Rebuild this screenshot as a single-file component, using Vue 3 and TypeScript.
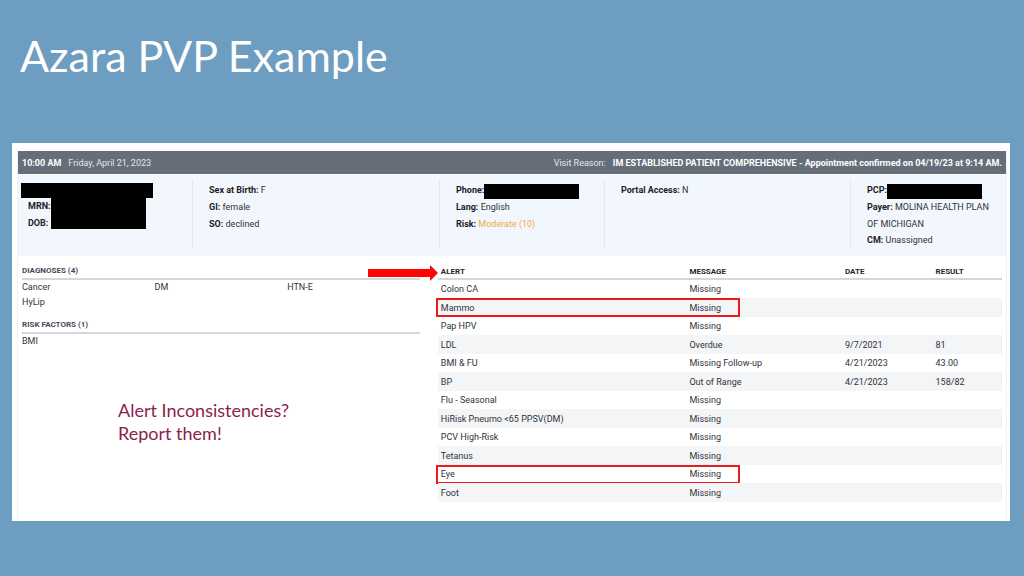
<script setup lang="ts">
interface Alert {
  name: string
  message: string
  date?: string
  result?: string
  marked?: boolean
}

const diagnoses: string[] = ['Cancer', 'DM', 'HTN-E', 'HyLip']
const riskFactors: string[] = ['BMI']

const alerts: Alert[] = [
  { name: 'Colon CA', message: 'Missing' },
  { name: 'Mammo', message: 'Missing', marked: true },
  { name: 'Pap HPV', message: 'Missing' },
  { name: 'LDL', message: 'Overdue', date: '9/7/2021', result: '81' },
  { name: 'BMI & FU', message: 'Missing Follow-up', date: '4/21/2023', result: '43.00' },
  { name: 'BP', message: 'Out of Range', date: '4/21/2023', result: '158/82' },
  { name: 'Flu - Seasonal', message: 'Missing' },
  { name: 'HiRisk Pneumo <65 PPSV(DM)', message: 'Missing' },
  { name: 'PCV High-Risk', message: 'Missing' },
  { name: 'Tetanus', message: 'Missing' },
  { name: 'Eye', message: 'Missing', marked: true },
  { name: 'Foot', message: 'Missing' },
]
</script>

<template>
  <main class="slide">
    <h1 class="title">Azara PVP Example</h1>

    <section class="panel">
      <div class="report">
        <header class="visit">
          <div class="when"><strong>10:00 AM</strong><span>Friday, April 21, 2023</span></div>
          <div class="reason">
            <span>Visit Reason:</span>
            <strong>IM ESTABLISHED PATIENT COMPREHENSIVE - Appointment confirmed on 04/19/23 at 9:14 AM.</strong>
          </div>
        </header>

        <div class="patient">
          <div class="cell identity">
            <div class="redacted name"></div>
            <div class="ids">
              <div class="labels">
                <p><b>MRN:</b></p>
                <p><b>DOB:</b></p>
              </div>
              <div class="redacted numbers"></div>
            </div>
          </div>
          <div class="cell">
            <p><b>Sex at Birth:</b> F</p>
            <p><b>GI:</b> female</p>
            <p><b>SO:</b> declined</p>
          </div>
          <div class="cell">
            <p class="hidden-value"><b>Phone:</b><span class="redacted value"></span></p>
            <p><b>Lang:</b> English</p>
            <p><b>Risk:</b> <span class="moderate">Moderate (10)</span></p>
          </div>
          <div class="cell">
            <p><b>Portal Access:</b> N</p>
          </div>
          <div class="cell">
            <p class="hidden-value"><b>PCP:</b><span class="redacted value"></span></p>
            <p><b>Payer:</b> MOLINA HEALTH PLAN<br />OF MICHIGAN</p>
            <p class="tight"><b>CM:</b> Unassigned</p>
          </div>
        </div>

        <div class="details">
          <div class="history">
            <h2>DIAGNOSES (4)</h2>
            <ul>
              <li v-for="d in diagnoses" :key="d">{{ d }}</li>
            </ul>
            <h2>RISK FACTORS (1)</h2>
            <ul>
              <li v-for="r in riskFactors" :key="r">{{ r }}</li>
            </ul>
            <p class="note">Alert Inconsistencies?<br />Report them!</p>
          </div>

          <div class="alerts">
            <svg class="arrow" viewBox="0 0 70 16" aria-hidden="true">
              <path d="M0 4H62V0L70 8L62 16V12H0Z" fill="#fb0505" />
            </svg>
            <table>
              <thead>
                <tr>
                  <th class="c-alert">ALERT</th>
                  <th class="c-message">MESSAGE</th>
                  <th class="c-date">DATE</th>
                  <th>RESULT</th>
                </tr>
              </thead>
              <tbody>
                <tr v-for="a in alerts" :key="a.name">
                  <td>{{ a.name }}<span v-if="a.marked" class="mark"></span></td>
                  <td>{{ a.message }}</td>
                  <td>{{ a.date }}</td>
                  <td>{{ a.result }}</td>
                </tr>
              </tbody>
            </table>
          </div>
        </div>
      </div>
    </section>
  </main>
</template>

<style>
body {
  margin: 0;
  background: #6d9dc0;
}
</style>

<style scoped>
.slide {
  box-sizing: border-box;
  min-height: 100vh;
  padding: 28px 14px 40px 12px;
  font-family: Lato, "Open Sans", sans-serif;
  color: #303338;
}
.title {
  margin: 0 0 59px 8px;
  font-size: 43px;
  line-height: 56px;
  font-weight: 400;
  color: #fff;
}
.panel {
  padding: 8px 3px 0 5px;
  background: #fff;
}
.report {
  border: solid #eef1f5;
  border-width: 0 1px;
  font-family: Roboto, "Open Sans", sans-serif;
  font-size: 9px;
}
.visit {
  display: flex;
  justify-content: space-between;
  padding: 1px 4px 0;
  line-height: 22px;
  background: #666e7a;
  color: #e3e6ea;
  white-space: nowrap;
}
.when,
.reason {
  display: flex;
  gap: 7px;
}
.visit strong {
  color: #fff;
}
.patient {
  display: grid;
  grid-template-columns: 174fr 247fr 165fr 246fr 156fr;
  margin-top: 1px;
  padding: 5px 0 7px;
  background: #f2f7fd;
}
.cell {
  min-height: 69px;
  box-sizing: border-box;
  padding: 2px 8px 0 16px;
  border-left: 1px solid #e2e8f0;
}
.cell p {
  margin: 0;
  line-height: 17px;
}
.cell .tight {
  line-height: 14px;
}
.cell b {
  color: #1d2024;
}
.cell.identity {
  padding: 3px 0 0 3px;
  border-left: 0;
}
.redacted {
  background: #000;
}
.name {
  width: 132px;
  height: 15px;
}
.ids {
  display: flex;
  padding-left: 7px;
}
.labels {
  width: 23px;
}
.numbers {
  width: 95px;
  height: 31px;
}
.hidden-value {
  display: flex;
}
.value {
  width: 95px;
  height: 15px;
  margin-top: 2px;
}
.moderate {
  color: #f5a742;
}
.details {
  display: grid;
  grid-template-columns: 397fr 563fr;
  column-gap: 18px;
  padding: 7px 4px 19px;
}
h2 {
  margin: 0;
  padding: 1px 0;
  border-bottom: 2px solid #d6d7d9;
  font-size: 8px;
  line-height: 13px;
  font-weight: 700;
  color: #454b57;
}
ul {
  display: grid;
  grid-template-columns: repeat(3, 1fr);
  margin: 0 0 7px;
  padding: 0;
  list-style: none;
  line-height: 15px;
}
.note {
  margin: 50px 0 0 96px;
  font-family: Lato, "Open Sans", sans-serif;
  font-size: 18px;
  line-height: 23px;
  color: #8c1d4f;
}
.alerts {
  position: relative;
  padding-top: 2px;
}
.arrow {
  position: absolute;
  top: 2px;
  left: -70px;
  width: 70px;
  height: 16px;
}
table {
  width: 100%;
  border-collapse: separate;
  border-spacing: 0;
  table-layout: fixed;
}
th,
td {
  padding: 0 3px;
  text-align: left;
  white-space: nowrap;
}
th {
  padding-top: 1px;
  border-bottom: 2px solid #d6d7d9;
  font-size: 8px;
  line-height: 12px;
  color: #24272c;
}
.c-alert {
  width: 43%;
}
.c-message {
  width: 26.5%;
}
.c-date {
  width: 15%;
}
tbody tr {
  position: relative;
}
td {
  height: 18px;
  line-height: 18px;
}
tbody tr:nth-child(even) td {
  height: 19px;
  background: #f3f5f7;
}
.mark {
  position: absolute;
  top: 0;
  left: -2px;
  box-sizing: border-box;
  width: 54%;
  height: 19px;
  border: 2px solid #ea1c1c;
}
</style>
